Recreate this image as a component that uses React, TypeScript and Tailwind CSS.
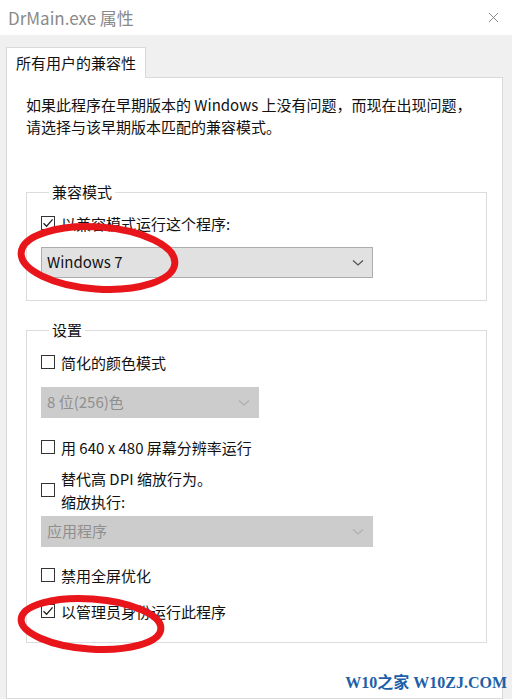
import { X } from "lucide-react";

const font = "font-['Microsoft_YaHei','Noto_Sans_CJK_SC',sans-serif]";

function Check({ checked = false }: { checked?: boolean }) {
  return (
    <span className="w-[14px] h-[14px] border border-[#333] bg-white flex items-center justify-center shrink-0">
      {checked && (
        <svg width="12" height="12" viewBox="0 0 12 12">
          <path d="M1.5 6.2 L4.6 9.2 L10.6 2.4" fill="none" stroke="#222" strokeWidth="1.3" />
        </svg>
      )}
    </span>
  );
}

function Select({ value, width, disabled = false }: { value: string; width: string; disabled?: boolean }) {
  return (
    <div
      className={`${width} h-[31px] flex items-center justify-between pl-[5px] pr-[8px] border ${
        disabled ? "bg-[#cccccc] border-[#cccccc] text-[#8f8f8f]" : "bg-[#e1e1e1] border-[#adadad] text-[#111]"
      }`}
    >
      <span className="text-[15px]">{value}</span>
      <svg width="12" height="8" viewBox="0 0 12 8">
        <path d="M1 1.5 L6 6 L11 1.5" fill="none" stroke={disabled ? "#b0b0b0" : "#555"} strokeWidth="1.3" />
      </svg>
    </div>
  );
}

function Row({ label, checked }: { label: string; checked?: boolean }) {
  return (
    <div className="flex items-center gap-[6px] h-[20px]">
      <Check checked={checked} />
      <span className="text-[15px] text-[#111] leading-none">{label}</span>
    </div>
  );
}

export default function App() {
  return (
    <div className={`relative w-[512px] h-[699px] bg-[#f0f0f0] overflow-hidden flex flex-col ${font}`}>
      {/* title bar */}
      <div className="h-[35px] bg-white flex items-center justify-between pl-[8px] pr-[10px] shrink-0">
        <span className="text-[17px] text-[#8a8a8a]">DrMain.exe 属性</span>
        <X className="w-[17px] h-[17px] text-[#777]" strokeWidth={1.2} />
      </div>

      {/* tab strip */}
      <div className="pt-[12px] pl-[6px] shrink-0">
        <div className="w-[140px] h-[31px] bg-white border border-b-0 border-[#d9d9d9] flex items-center pl-[9px] relative z-10">
          <span className="text-[15px] text-[#111]">所有用户的兼容性</span>
        </div>
      </div>

      {/* tab panel */}
      <div className="ml-[6px] w-[497px] flex-1 -mt-px bg-white border border-[#d9d9d9] pl-[19px] pt-[16px]">
        <p className="text-[15px] leading-[22px] text-[#111]">
          如果此程序在早期版本的 Windows 上没有问题，而现在出现问题，
          <br />
          请选择与该早期版本匹配的兼容模式。
        </p>

        <fieldset className="mt-[45px] w-[461px] h-[118px] border border-[#dcdcdc] px-[14px] pt-[12px] m-0">
          <legend className="ml-[8px] px-[3px] text-[15px] leading-[18px] text-[#111]">兼容模式</legend>
          <Row label="以兼容模式运行这个程序:" checked />
          <div className="mt-[14px]">
            <Select value="Windows 7" width="w-[332px]" />
          </div>
        </fieldset>

        <fieldset className="mt-[20px] w-[461px] h-[322px] border border-[#dcdcdc] px-[14px] pt-[13px] m-0">
          <legend className="ml-[8px] px-[3px] text-[15px] leading-[18px] text-[#111]">设置</legend>
          <Row label="简化的颜色模式" />
          <div className="mt-[15px]">
            <Select value="8 位(256)色" width="w-[218px]" disabled />
          </div>
          <div className="mt-[19px]">
            <Row label="用 640 x 480 屏幕分辨率运行" />
          </div>
          <div className="mt-[10px] flex items-center gap-[6px]">
            <Check />
            <div className="text-[15px] leading-[23px] text-[#111]">
              替代高 DPI 缩放行为。
              <br />
              缩放执行:
            </div>
          </div>
          <div className="mt-[3px]">
            <Select value="应用程序" width="w-[332px]" disabled />
          </div>
          <div className="mt-[18px]">
            <Row label="禁用全屏优化" />
          </div>
          <div className="mt-[16px]">
            <Row label="以管理员身份运行此程序" checked />
          </div>
        </fieldset>
      </div>

      {/* red annotation ellipses */}
      <svg className="absolute left-0 top-0 pointer-events-none" width="512" height="699">
        <ellipse cx="98" cy="258" rx="77" ry="31" fill="none" stroke="#e8151b" strokeWidth="7" transform="rotate(4 98 258)" />
        <ellipse cx="91" cy="624" rx="70" ry="25" fill="none" stroke="#e8151b" strokeWidth="7" transform="rotate(4 91 624)" />
      </svg>

      {/* watermark */}
      <div className="absolute right-[5px] bottom-[4px] text-[16px] font-bold text-[#1d5fa8] font-['Liberation_Serif','Noto_Sans_CJK_SC',serif]">
        W10之家 W10ZJ.COM
      </div>
    </div>
  );
}
